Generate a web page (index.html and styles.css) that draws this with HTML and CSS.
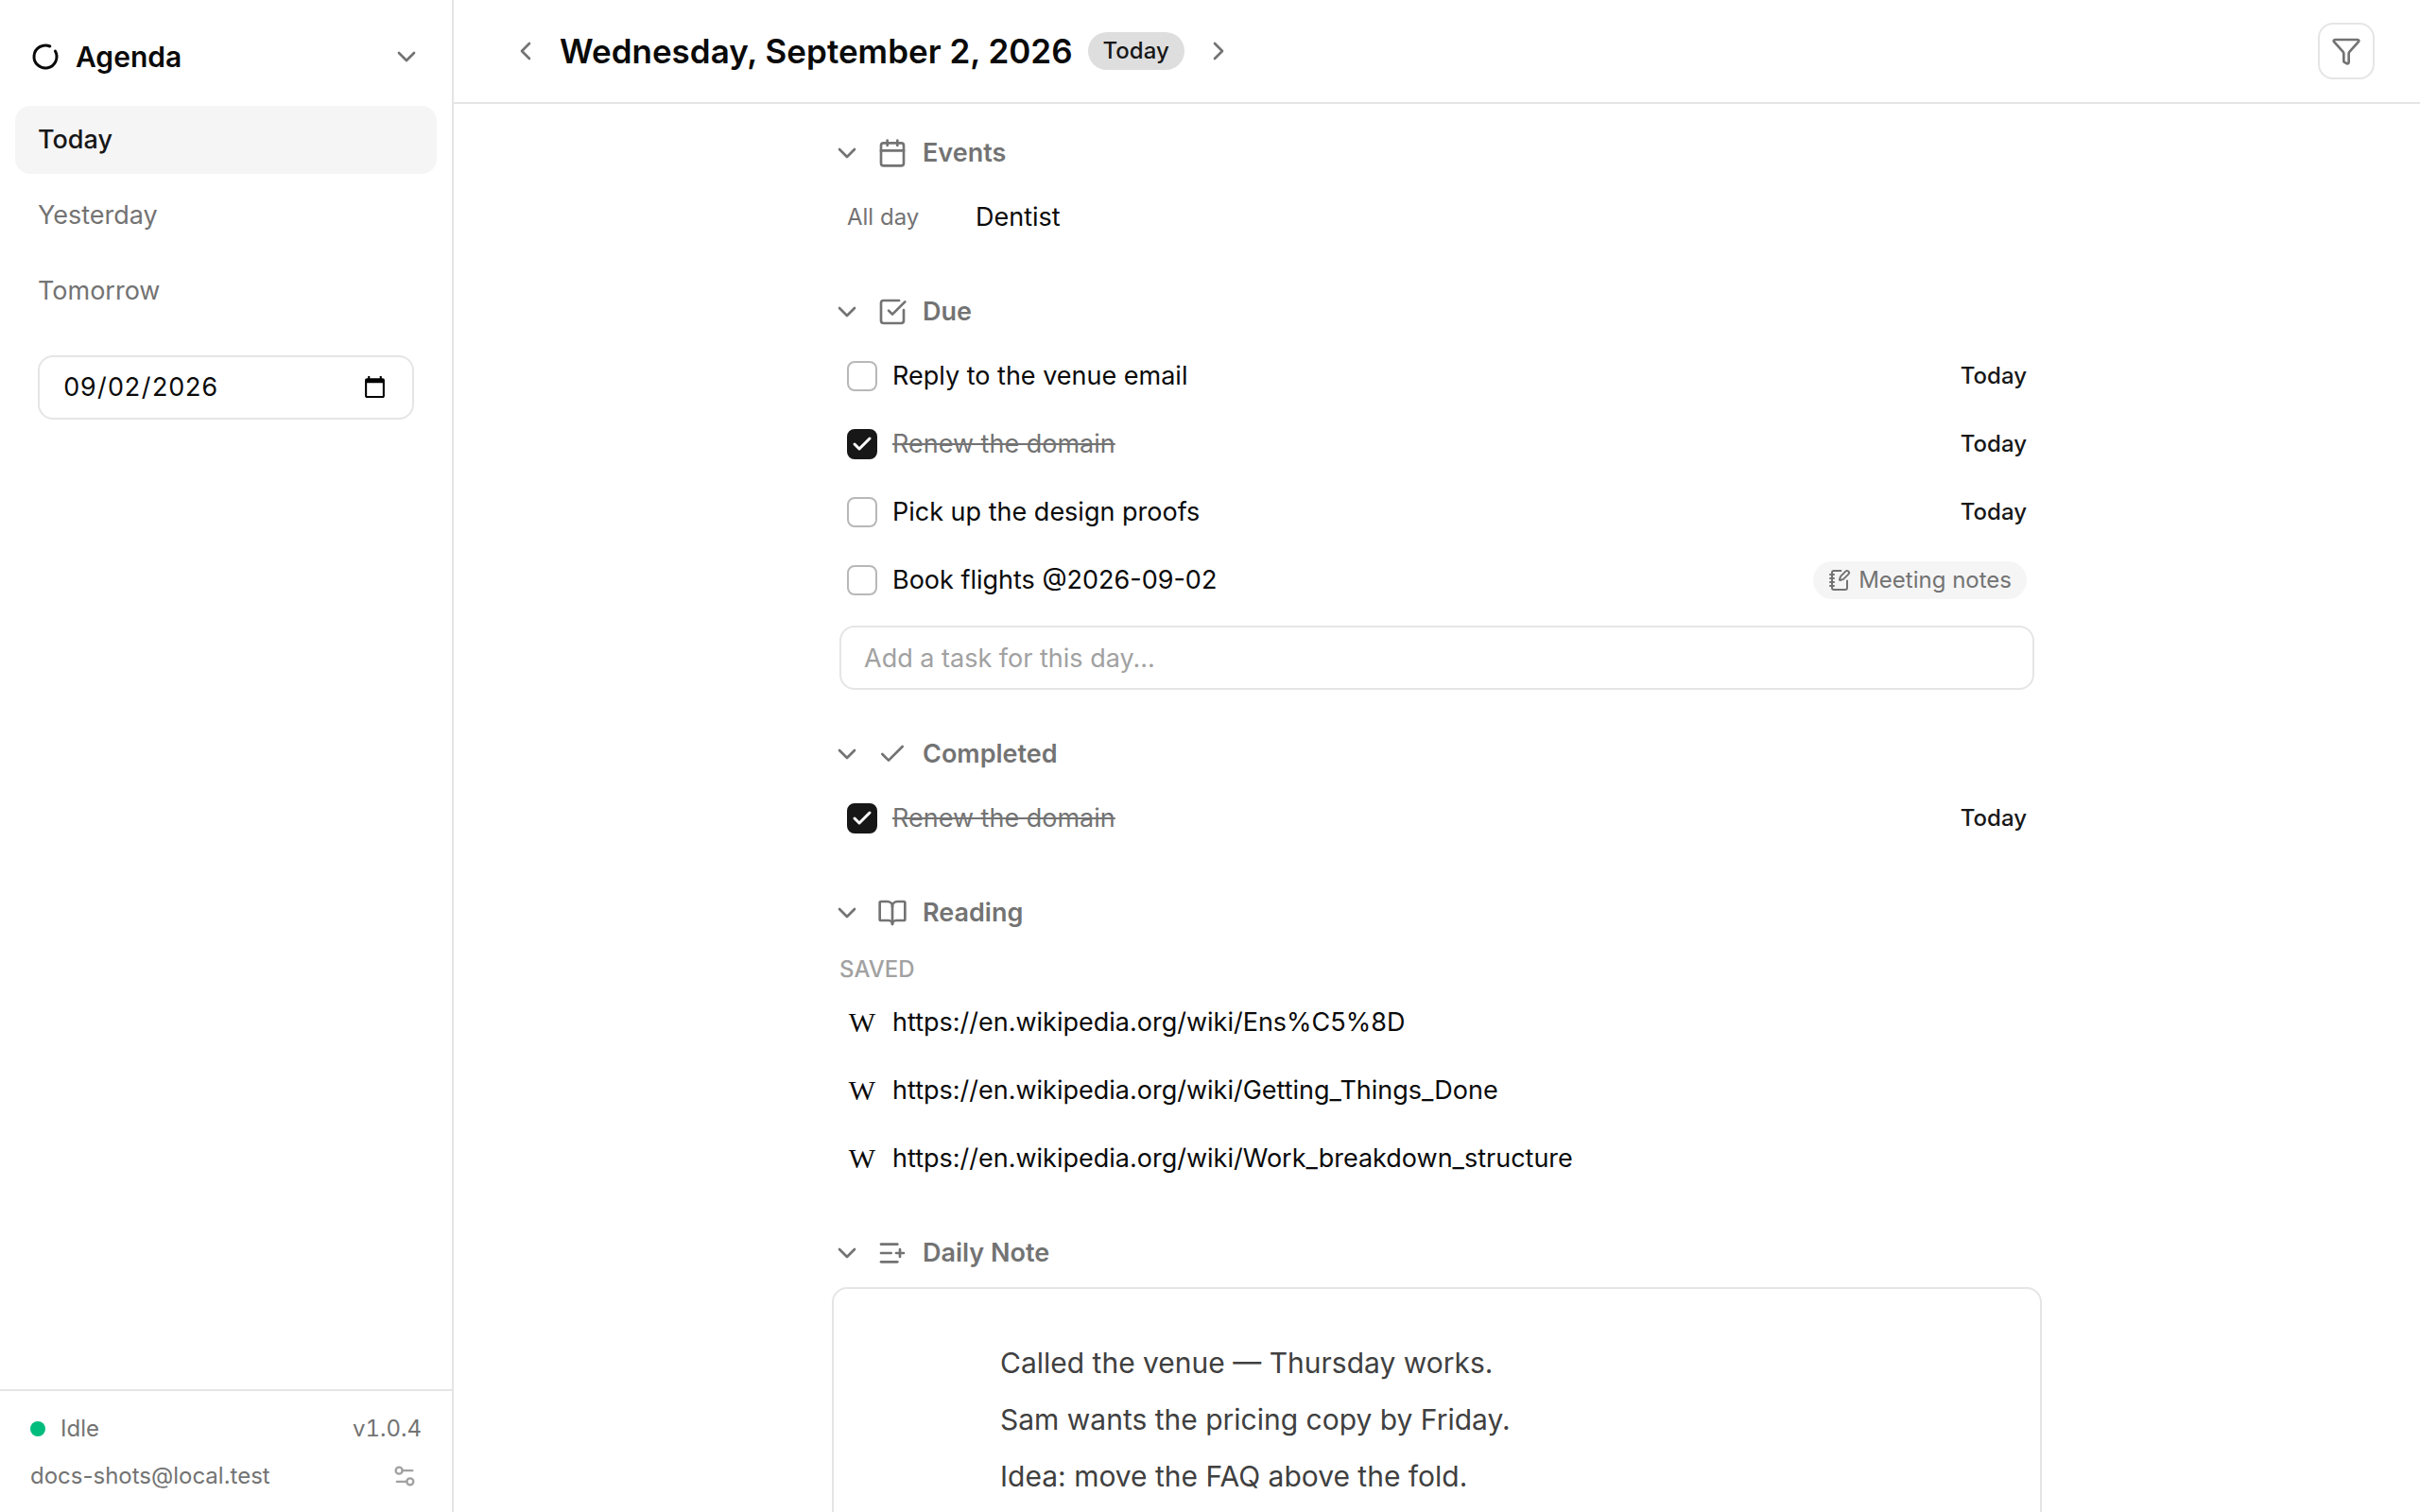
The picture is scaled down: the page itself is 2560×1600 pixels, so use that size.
FILE: index.html
```
<!DOCTYPE html>
<html lang="en">
<head>
  <meta charset="UTF-8" />
  <meta name="viewport" content="width=device-width, initial-scale=1.0"/>
  <title>Agenda</title>
  <link rel="stylesheet" href="styles.css">
</head>
<body>
  <svg class="sprite" aria-hidden="true">
    <symbol id="chevron-down" viewBox="0 0 24 24"><path d="m6 9 6 6 6-6"/></symbol>
    <symbol id="chevron-left" viewBox="0 0 24 24"><path d="m15 18-6-6 6-6"/></symbol>
    <symbol id="chevron-right" viewBox="0 0 24 24"><path d="m9 18 6-6-6-6"/></symbol>
    <symbol id="check" viewBox="0 0 24 24"><path d="M20 6 9 17l-5-5"/></symbol>
  </svg>

  <aside class="sidebar">
    <button class="brand" type="button">
      <svg class="logo" viewBox="0 0 32 32"><path d="M20.8 5A12 12 0 1 0 26.4 10"/></svg>
      <span class="brand-name">Agenda</span>
      <svg class="icon"><use href="#chevron-down"/></svg>
    </button>

    <nav class="nav">
      <a class="nav-item active" href="#today">Today</a>
      <a class="nav-item" href="#yesterday">Yesterday</a>
      <a class="nav-item" href="#tomorrow">Tomorrow</a>
    </nav>
    <input class="field date-field" type="date" value="2026-09-02" aria-label="Go to date">

    <footer class="status">
      <div class="status-row">
        <span class="dot"></span>
        <span>Idle</span>
        <span class="version">v1.0.4</span>
      </div>
      <div class="status-row">
        <span>docs-shots@local.test</span>
        <button class="settings" type="button" aria-label="Settings">
          <svg class="icon" viewBox="0 0 24 24"><path d="M14 17H5"/><path d="M19 7h-9"/><circle cx="17" cy="17" r="3"/><circle cx="7" cy="7" r="3"/></svg>
        </button>
      </div>
    </footer>
  </aside>

  <div class="page">
    <header class="topbar">
      <button class="step" type="button" aria-label="Previous day"><svg class="icon"><use href="#chevron-left"/></svg></button>
      <h1>Wednesday, September 2, 2026</h1>
      <span class="badge">Today</span>
      <button class="step" type="button" aria-label="Next day"><svg class="icon"><use href="#chevron-right"/></svg></button>
      <button class="filter" type="button" aria-label="Filter">
        <svg class="icon" viewBox="0 0 24 24"><path d="M10 20a1 1 0 0 0 .553.895l2 1A1 1 0 0 0 14 21v-7a2 2 0 0 1 .517-1.341L21.74 4.67A1 1 0 0 0 21 3H3a1 1 0 0 0-.742 1.67l7.225 7.989A2 2 0 0 1 10 14z"/></svg>
      </button>
    </header>

    <main class="content">
      <section class="section">
        <h2><button class="section-head" type="button">
          <svg class="icon"><use href="#chevron-down"/></svg>
          <svg class="icon" viewBox="0 0 24 24"><path d="M8 2v4"/><path d="M16 2v4"/><rect width="18" height="18" x="3" y="4" rx="2"/><path d="M3 10h18"/></svg>
          Events
        </button></h2>
        <div class="rows">
          <div class="row event">
            <span class="event-time">All day</span>
            <span>Dentist</span>
          </div>
        </div>
      </section>

      <section class="section">
        <h2><button class="section-head" type="button">
          <svg class="icon"><use href="#chevron-down"/></svg>
          <svg class="icon" viewBox="0 0 24 24"><path d="M21 10.656V19a2 2 0 0 1-2 2H5a2 2 0 0 1-2-2V5a2 2 0 0 1 2-2h12.344"/><path d="m9 11 3 3L22 4"/></svg>
          Due
        </button></h2>
        <div class="rows">
          <div class="row">
            <label class="task"><input type="checkbox"><svg class="tick"><use href="#check"/></svg><span>Reply to the venue email</span></label>
            <span class="when">Today</span>
          </div>
          <div class="row">
            <label class="task"><input type="checkbox" checked><svg class="tick"><use href="#check"/></svg><span>Renew the domain</span></label>
            <span class="when">Today</span>
          </div>
          <div class="row">
            <label class="task"><input type="checkbox"><svg class="tick"><use href="#check"/></svg><span>Pick up the design proofs</span></label>
            <span class="when">Today</span>
          </div>
          <div class="row">
            <label class="task"><input type="checkbox"><svg class="tick"><use href="#check"/></svg><span>Book flights @2026-09-02</span></label>
            <a class="source" href="#meeting-notes">
              <svg class="icon" viewBox="0 0 24 24"><path d="M13.4 2H6a2 2 0 0 0-2 2v16a2 2 0 0 0 2 2h12a2 2 0 0 0 2-2v-7.4"/><path d="M2 6h4"/><path d="M2 10h4"/><path d="M2 14h4"/><path d="M2 18h4"/><path d="M21.378 5.626a1 1 0 1 0-3.004-3.004l-5.01 5.012a2 2 0 0 0-.506.854l-.837 2.87a.5.5 0 0 0 .62.62l2.87-.837a2 2 0 0 0 .854-.506z"/></svg>
              Meeting notes
            </a>
          </div>
        </div>
        <input class="field add-task" type="text" placeholder="Add a task for this day..." aria-label="Add a task for this day">
      </section>

      <section class="section">
        <h2><button class="section-head" type="button">
          <svg class="icon"><use href="#chevron-down"/></svg>
          <svg class="icon"><use href="#check"/></svg>
          Completed
        </button></h2>
        <div class="rows">
          <div class="row">
            <label class="task"><input type="checkbox" checked><svg class="tick"><use href="#check"/></svg><span>Renew the domain</span></label>
            <span class="when">Today</span>
          </div>
        </div>
      </section>

      <section class="section">
        <h2><button class="section-head" type="button">
          <svg class="icon"><use href="#chevron-down"/></svg>
          <svg class="icon" viewBox="0 0 24 24"><path d="M12 7v14"/><path d="M3 18a1 1 0 0 1-1-1V4a1 1 0 0 1 1-1h5a4 4 0 0 1 4 4 4 4 0 0 1 4-4h5a1 1 0 0 1 1 1v13a1 1 0 0 1-1 1h-6a3 3 0 0 0-3 3 3 3 0 0 0-3-3z"/></svg>
          Reading
        </button></h2>
        <h3>Saved</h3>
        <div class="rows">
          <a class="row link" href="#ens"><span class="favicon" aria-hidden="true">W</span>https://en.wikipedia.org/wiki/Ens%C5%8D</a>
          <a class="row link" href="#gtd"><span class="favicon" aria-hidden="true">W</span>https://en.wikipedia.org/wiki/Getting_Things_Done</a>
          <a class="row link" href="#wbs"><span class="favicon" aria-hidden="true">W</span>https://en.wikipedia.org/wiki/Work_breakdown_structure</a>
        </div>
      </section>

      <section class="section">
        <h2><button class="section-head" type="button">
          <svg class="icon"><use href="#chevron-down"/></svg>
          <svg class="icon" viewBox="0 0 24 24"><path d="M16 5H3"/><path d="M11 12H3"/><path d="M16 19H3"/><path d="M18 9v6"/><path d="M21 12h-6"/></svg>
          Daily Note
        </button></h2>
        <article class="note">
          <p>Called the venue — Thursday works.</p>
          <p>Sam wants the pricing copy by Friday.</p>
          <p>Idea: move the FAQ above the fold.</p>
        </article>
      </section>
    </main>
  </div>
</body>
</html>
```
FILE: styles.css
```
* {
  box-sizing: border-box;
}

body {
  margin: 0;
  height: 100vh;
  display: flex;
  overflow: hidden;
  background-color: #fff;
  color: #0a0a0a;
  font-family: Inter, sans-serif;
  font-size: 27px;
  line-height: 40px;
}

h1, h2, h3, p {
  margin: 0;
}

a {
  color: inherit;
  text-decoration: none;
}

button {
  display: flex;
  align-items: center;
  padding: 0;
  border: none;
  background: none;
  color: #737373;
  font: inherit;
  cursor: pointer;
}

.sprite {
  display: none;
}

.icon, .tick, .logo {
  width: 32px;
  height: 32px;
  flex-shrink: 0;
  fill: none;
  stroke: currentColor;
  stroke-width: 2;
  stroke-linecap: round;
  stroke-linejoin: round;
}

.field {
  height: 68px;
  padding: 0 24px;
  border: 2px solid #e5e5e5;
  border-radius: 16px;
  background-color: #fff;
  color: #0a0a0a;
  font: inherit;
}

/* sidebar */
.sidebar {
  width: 480px;
  flex-shrink: 0;
  display: flex;
  flex-direction: column;
  border-right: 2px solid #e5e5e5;
}

.brand {
  gap: 16px;
  height: 72px;
  margin: 24px 32px 16px;
  color: #0a0a0a;
}

.logo {
  stroke-width: 3;
}

.brand-name {
  flex: 1;
  text-align: left;
  font-size: 30px;
  font-weight: 600;
}

.brand .icon {
  color: #737373;
}

.nav {
  display: flex;
  flex-direction: column;
  gap: 8px;
  padding: 0 16px;
}

.nav-item {
  padding: 16px 24px;
  border-radius: 16px;
  color: #737373;
}

.nav-item.active {
  background-color: #f5f5f5;
  color: #171717;
  font-weight: 500;
}

.date-field {
  margin: 32px 40px 0;
  font-variant-numeric: tabular-nums;
}

.status {
  display: flex;
  flex-direction: column;
  gap: 10px;
  margin-top: auto;
  padding: 20px 32px 18px;
  border-top: 2px solid #e5e5e5;
  color: #737373;
  font-size: 24px;
}

.status-row {
  display: flex;
  align-items: center;
}

.dot {
  width: 16px;
  height: 16px;
  margin-right: 16px;
  border-radius: 50%;
  background-color: #00bc7d;
}

.version {
  margin-left: auto;
  font-variant-numeric: tabular-nums;
}

.settings {
  margin-left: auto;
  padding: 0 4px;
  color: #a1a1a1;
}

.settings .icon {
  width: 28px;
  height: 28px;
}

/* day view */
.page {
  flex: 1;
  min-width: 0;
  display: flex;
  flex-direction: column;
}

.topbar {
  display: flex;
  align-items: center;
  gap: 16px;
  padding: 24px 48px 24px 56px;
  border-bottom: 2px solid #e5e5e5;
}

h1 {
  font-size: 35px;
  font-weight: 600;
}

.badge {
  padding: 0 16px;
  border-radius: 20px;
  background-color: #dedede;
  color: #171717;
  font-size: 24px;
  font-weight: 500;
}

.step {
  width: 40px;
  height: 40px;
  justify-content: center;
}

.filter {
  width: 60px;
  height: 60px;
  margin-left: auto;
  justify-content: center;
  border: 2px solid #e5e5e5;
  border-radius: 16px;
}

.content {
  flex: 1;
  min-height: 0;
  overflow: hidden;
  display: flex;
  flex-direction: column;
  align-items: center;
  gap: 48px;
  padding: 32px 32px 0;
}

.section {
  width: 100%;
  max-width: 1280px;
}

h2 {
  margin-bottom: 16px;
  font-size: 27px;
  font-weight: 600;
}

.section-head {
  gap: 16px;
}

h3 {
  padding: 4px 8px;
  color: #a1a1a1;
  font-size: 24px;
  font-weight: 500;
  text-transform: uppercase;
}

.rows {
  display: flex;
  flex-direction: column;
  gap: 8px;
}

.row {
  display: flex;
  align-items: center;
  gap: 16px;
  height: 64px;
  padding: 0 16px;
}

.event {
  gap: 24px;
}

.event-time {
  width: 112px;
  color: #737373;
  font-size: 24px;
}

.task {
  flex: 1;
  display: grid;
  grid-template-columns: 32px 1fr;
  align-items: center;
  column-gap: 16px;
}

.task input {
  grid-area: 1 / 1;
  width: 32px;
  height: 32px;
  margin: 0;
  appearance: none;
  border: 2px solid #b8b8b8;
  border-radius: 8px;
}

.task input:checked {
  border-color: #171717;
  background-color: #171717;
}

.tick {
  grid-area: 1 / 1;
  width: 24px;
  height: 24px;
  justify-self: center;
  visibility: hidden;
  color: #fff;
  stroke-width: 3;
}

.task input:checked ~ .tick {
  visibility: visible;
}

.task input:checked ~ span {
  color: #737373;
  text-decoration: line-through;
}

.when {
  color: #171717;
  font-size: 24px;
  font-weight: 500;
}

.source {
  display: flex;
  align-items: center;
  gap: 8px;
  padding: 0 16px;
  border-radius: 20px;
  background-color: #f5f5f5;
  color: #737373;
  font-size: 24px;
}

.source .icon {
  width: 24px;
  height: 24px;
}

.add-task {
  display: block;
  width: calc(100% - 16px);
  margin: 16px 8px 0;
}

.add-task::placeholder {
  color: #a1a1a1;
}

.favicon {
  width: 32px;
  text-align: center;
  font-family: "Liberation Serif", serif;
  font-size: 30px;
}

.note {
  height: 400px;
  padding: 48px 176px;
  border: 2px solid #e5e5e5;
  border-radius: 16px;
  color: #404040;
  font-size: 30px;
  line-height: 60px;
}
```
